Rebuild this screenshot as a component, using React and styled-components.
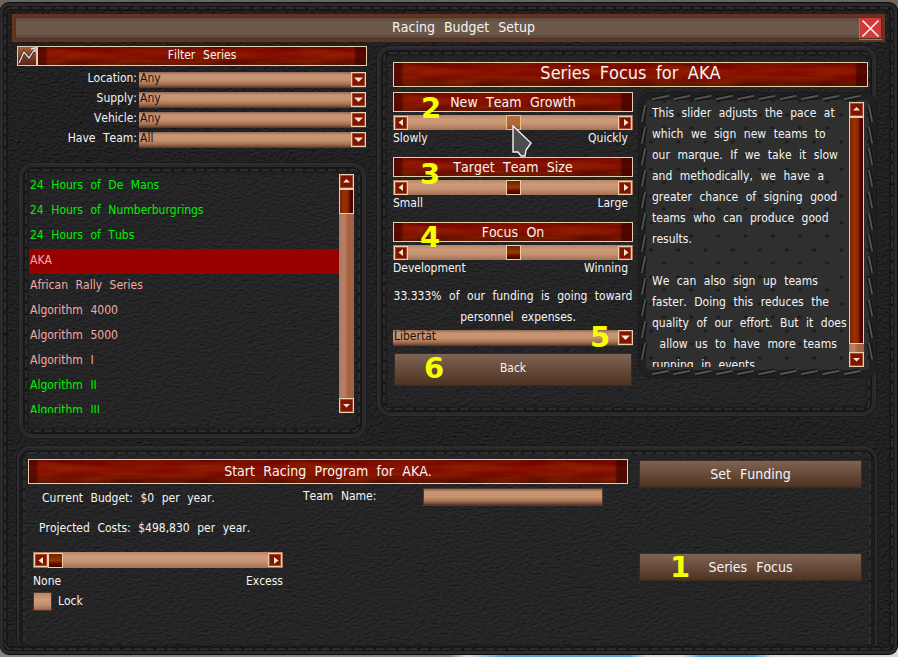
import React from "react";
import styled, { createGlobalStyle, css } from "styled-components";

const svgUrl = svg => `url("data:image/svg+xml,${encodeURIComponent(svg)}")`;

const noise = (freq, color, scale, seed) =>
  svgUrl(
    `<svg xmlns="http://www.w3.org/2000/svg" width="300" height="300"><filter id="n" x="0" y="0" width="100%" height="100%" color-interpolation-filters="sRGB"><feTurbulence type="fractalNoise" baseFrequency="${freq}" numOctaves="4" seed="${seed}" stitchTiles="stitch"/><feDiffuseLighting surfaceScale="${scale}" lighting-color="${color}"><feDistantLight azimuth="250" elevation="55"/></feDiffuseLighting></filter><rect width="300" height="300" filter="url(#n)"/></svg>`
  );

// long horizontal streaks, laid over the red headings
const grain = svgUrl(
  `<svg xmlns="http://www.w3.org/2000/svg" width="260" height="24"><filter id="g" x="0" y="0" width="100%" height="100%" color-interpolation-filters="sRGB"><feTurbulence type="fractalNoise" baseFrequency="0.02 0.16" numOctaves="3" seed="3" stitchTiles="stitch"/><feColorMatrix values="0 0 0 0 0.6  0 0 0 0 0.18  0 0 0 0 0  1 0 0 0 -0.25"/></filter><rect width="260" height="24" filter="url(#g)"/></svg>`
);

const leather = noise("0.22 0.5", "#2d2d2f", 0.9, 4);
const roughLeather = noise("0.3 0.5", "#29292b", 1.3, 9);

const redWood = css`
  background:
    linear-gradient(90deg, rgba(50, 0, 0, 0.5) 0 7px, transparent 10px calc(100% - 12px), rgba(50, 0, 0, 0.6) calc(100% - 10px)),
    ${grain},
    linear-gradient(#680000, #840a00 30%, #7e0700 60%, #5e0e00 85%, #4c1000);
`;

const copper = "linear-gradient(#8d6650, #c89574 18%, #c69272 50%, #a87252 75%, #6d4532 94%, #4c3328)";
const copperV = "linear-gradient(90deg, #a87a61, #b98166 35%, #a95f3d 60%, #97654a)";

const GlobalStyle = createGlobalStyle`
  * {
    box-sizing: border-box;
  }
  body {
    margin: 0;
    overflow: hidden;
    background: #6b665d;
    color: #f4f4f4;
    font-family: "DejaVu Sans Condensed", "DejaVu Sans", sans-serif;
    font-stretch: condensed;
    font-kerning: none;
    font-size: 12px;
    line-height: 16px;
    word-spacing: 4.1px;
    white-space: pre;
  }
`;

const Screen = styled.div`
  width: 898px;
  height: 657px;
  padding: 2px 0 2px 0;
  background: linear-gradient(#6b665d 0 50%, transparent 50%),
    linear-gradient(90deg, #8b8085 0 50%, #d8d8dc 52%, #4f9fdc 56% 70%, #d8d8dc 72% 76%, #4f9fdc 78% 84%, #d8d8dc 86%);
`;

const Window = styled.div`
  position: relative;
  display: flex;
  flex-direction: column;
  height: 653px;
  padding: 12px 12px 0 12px;
  border-radius: 9px;
  border: 1px solid #0c0c0c;
  border-width: 1px 1px 1px 0;
  background: ${roughLeather};
  box-shadow: inset 0 0 0 3px #2a2a2a, inset 0 0 0 8px rgba(14, 14, 14, 0.45);
`;

const StitchSvg = styled.svg`
  position: absolute;
  inset: 0;
  width: 100%;
  height: 100%;
  pointer-events: none;
`;

const StitchLine = styled.rect`
  x: ${props => props.$inset}px;
  y: ${props => props.$inset}px;
  width: calc(100% - ${props => props.$inset * 2}px);
  height: calc(100% - ${props => props.$inset * 2}px);
  fill: none;
  stroke: #414141;
  stroke-width: 1;
  stroke-dasharray: 8 3;
`;

const Stitching = ({ inset, radius = 5 }) => (
  <StitchSvg>
    <StitchLine $inset={inset} rx={radius} />
  </StitchSvg>
);

const TitleBar = styled.div`
  position: relative;
  display: flex;
  align-items: center;
  justify-content: center;
  height: 28px;
  margin-top: -1px;
  padding-left: 53px;
  border: 3px solid #63351f;
  outline: 1px solid #4a3426;
  outline-offset: -4px;
  background: linear-gradient(#5c493d, #6d594a 30%, #6b5748 75%, #554237);
  font-size: 14px;
`;

const TitleText = styled.div`
  flex: 1;
  padding-bottom: 2px;
  text-align: center;
  word-spacing: 5px;
`;

const CloseButton = styled.button`
  display: flex;
  width: 23px;
  height: 23px;
  padding: 0;
  border: 1px solid #dc5a55;
  background: #cf3a3b;
`;

const Main = styled.div`
  display: flex;
  justify-content: space-between;
  height: 396px;
  padding: 4px 9px 0 5px;
`;

const LeftColumn = styled.div`
  display: flex;
  flex-direction: column;
  width: 350px;
`;

const FilterBar = styled.div`
  display: flex;
`;

const ChartButton = styled.div`
  display: flex;
  width: 21px;
  height: 20px;
  border: 1px solid #e0c9ac;
  border-right-width: 2px;
  background: linear-gradient(#a85f38, #7c3a22 60%, #5a2616);
`;

const Heading = styled.div`
  ${redWood}
  flex: 1 0 auto;
  height: ${props => props.$height || 20}px;
  border: 1px solid #e3cfa9;
  font-size: ${props => props.$size || 14}px;
  line-height: ${props => props.$line || 18}px;
  text-align: center;
  word-spacing: 4.4px;
`;

const FilterHeading = styled(Heading)`
  flex: 1;
  margin-left: -1px;
`;

const Filters = styled.div`
  display: grid;
  grid-template-columns: 120px 227px;
  grid-auto-rows: 20px;
  column-gap: 2px;
  padding-top: 6px;
`;

const FilterLabel = styled.div`
  text-align: right;
  line-height: 13px;
`;

const SelectBox = styled.div`
  display: flex;
  justify-content: space-between;
  height: 16px;
  padding-left: 1px;
  background: ${copper};
  color: #1b110b;
  line-height: 13px;
`;

const SquareButton = styled.div`
  display: flex;
  align-items: center;
  justify-content: center;
  flex: none;
  width: ${props => props.$size || 15}px;
  height: ${props => props.$size || 15}px;
  border: 1px solid #ecd0ae;
  background: #7e1503;
  box-shadow: inset 0 0 0 1px #a94a2c;
`;

const Panel = styled.div`
  position: relative;
  border: 2px solid #2d2d2d;
  border-radius: 14px;
  background: ${leather};
  box-shadow: 0 0 0 1px #1a1a1a, inset 0 0 0 2px #282828, inset 0 0 0 6px rgba(18, 18, 18, 0.55),
    inset 0 0 2px 8px rgba(18, 18, 18, 0.3);
`;

const ListPanel = styled(Panel)`
  display: flex;
  width: 347px;
  height: 276px;
  margin: 11px 0 0 2px;
  padding: 9px 10px 0 8px;
`;

const List = styled.div`
  flex: 1;
  height: 239px;
  overflow: hidden;
`;

const ListItem = styled.div`
  height: 25px;
  padding-left: 1px;
  color: ${props => (props.$available ? "#00f000" : "#f2aaa6")};
  background: ${props => (props.$selected ? "#990000" : "none")};
  line-height: 22px;
`;

const VerticalBar = styled.div`
  display: flex;
  flex-direction: column;
  justify-content: space-between;
  width: 15px;
  height: ${props => props.$height}px;
  background: ${copperV};
`;

const VerticalThumb = styled.div`
  height: ${props => props.$height}px;
  margin-bottom: auto;
  border: 1px solid #e8cda8;
  background: linear-gradient(90deg, #7a2400, #963400 30%, #8e2800 60%, #4c0000 85%);
`;

const FocusPanel = styled(Panel)`
  width: 499px;
  height: 370px;
  padding: 14px 0 0 14px;
`;

const FocusBody = styled.div`
  display: flex;
  gap: 5px;
  padding-top: 5px;
`;

const FocusHeading = styled(Heading)`
  width: 475px;
`;

const Controls = styled.div`
  flex: none;
  width: 240px;
`;

const Setting = styled.div`
  height: 65px;
`;

const SliderTrack = styled.div`
  display: flex;
  justify-content: space-between;
  align-items: center;
  height: ${props => props.$height || 15}px;
  margin-top: 3px;
  background: linear-gradient(#b98565, #cd9b7b 30%, #c69373 60%, #a47052);
  border: 1px solid #a87558;
  border-width: 0 1px;
`;

const SliderThumb = styled.div`
  width: 15px;
  height: 15px;
  border: 1px solid ${props => (props.$hover ? "#e3c878" : "#ecd0ae")};
  background: ${props =>
    props.$hover ? "linear-gradient(#b66a3e, #ad6540 70%, #8d4428)" : "linear-gradient(#6f2200, #983800 50%, #6b1000 72%, #450000)"};
`;

const SliderLabels = styled.div`
  display: flex;
  justify-content: space-between;
  padding-right: ${props => props.$right || 0}px;
`;

const Funding = styled.div`
  margin-top: -1px;
  text-align: center;
  line-height: 21px;
`;

const FundingLine = styled.div`
  padding-left: ${props => props.$left || 0}px;
`;

const TeamSelect = styled(SelectBox)`
  margin-top: 2px;
`;

const Button = styled.button`
  display: block;
  width: ${props => props.$width}px;
  height: ${props => props.$height}px;
  padding: 0;
  border: 1px solid #3b2a20;
  background: linear-gradient(#7d6353, #6a4e3d 45%, #4d3222);
  color: #f4f4f4;
  font: inherit;
  font-size: ${props => props.$size || 14}px;
  word-spacing: 5px;
`;

const BackButton = styled(Button)`
  margin: 7px 0 0 1px;
  padding-bottom: 3px;
`;

const HelpBox = styled.div`
  position: relative;
  flex: none;
  width: 239px;
  height: 286px;
  padding: 9px 12px 0 13px;
  border-radius: 12px;
  border: 1px solid #191919;
  background:
    radial-gradient(ellipse 2.5px 2px at 7px 10px, #1c1c1c 60%, transparent),
    radial-gradient(ellipse 2.5px 2px at 20px 23px, #1c1c1c 60%, transparent),
    #2f2f2f;
  background-size: 27.2px 27px;
  background-position: 5px 12px;
  box-shadow: inset 0 0 0 7px #202020;
`;

const HelpContent = styled.div`
  display: flex;
  justify-content: space-between;
`;

const HelpText = styled.div`
  height: 265px;
  padding-top: 1px;
  overflow: hidden;
  line-height: 21px;
`;

const ProgramPanel = styled(Panel)`
  display: flex;
  gap: 11px;
  width: 860px;
  height: 198px;
  margin: 8px 0 0 5px;
  padding: 11px 8px 0 9px;
  border-bottom: 0;
  border-radius: 14px 14px 0 0;
  box-shadow: 0 0 0 1px #1a1a1a, inset 0 2px 0 #282828, inset 0 6px 0 rgba(18, 18, 18, 0.55),
    inset 6px 0 0 rgba(18, 18, 18, 0.45), inset -6px 0 0 rgba(18, 18, 18, 0.45);
  clip-path: inset(-1px -1px 0);
`;

const PanelStitching = styled.div`
  position: absolute;
  inset: 0 0 -20px 0;
  pointer-events: none;
`;

const Program = styled.div`
  width: 600px;
`;

const ProgramDetails = styled.div`
  display: flex;
`;

const Budget = styled.div`
  width: 250px;
  margin-left: 5px;
`;

const BudgetLine = styled.div`
  height: 30px;
  padding: 6px 0 0 ${props => props.$left}px;
`;

const BudgetTrack = styled(SliderTrack)`
  height: 16px;
  margin: 8px 0 5px;
  justify-content: flex-start;
`;

const Spacer = styled.div`
  flex: 1;
`;

const LockRow = styled.div`
  display: flex;
  gap: 6px;
  margin-top: 3px;
  line-height: 19px;
`;

const Checkbox = styled.div`
  width: 19px;
  height: 19px;
  border: 1px solid #523628;
  background: linear-gradient(#b68364, #cf9d7d 40%, #c29070 70%, #9a6848);
`;

const TeamName = styled.div`
  display: flex;
  justify-content: space-between;
  width: 300px;
  height: 18px;
  margin: 4px 0 0 20px;
`;

const NameInput = styled.div`
  width: 180px;
  height: 18px;
  border: 1px solid #513a31;
  background: ${copper};
`;

const Actions = styled.div`
  display: flex;
  flex-direction: column;
  gap: 65px;
  padding-top: 1px;
`;

const Marker = styled.div`
  position: absolute;
  left: ${props => props.$x}px;
  top: ${props => props.$y}px;
  color: #f6ff00;
  font: bold 29px/30px "DejaVu Sans", sans-serif;
`;

const Cursor = styled.svg`
  position: absolute;
  left: 511px;
  top: 122px;
`;

const shapes = {
  up: "M3 7.5 L6.5 4 L10 7.5 Z",
  down: "M2 4.5 H11 L6.5 9 Z",
  smallDown: "M3 5 H10 L6.5 8.5 Z",
  left: "M8 3 V10 L3.5 6.5 Z",
  right: "M5 3 V10 L9.5 6.5 Z"
};

const ArrowButton = ({ shape, size }) => (
  <SquareButton $size={size}>
    <svg width="13" height="13" style={{ flex: "none" }}>
      <path d={shapes[shape]} fill="#f7e6cd" />
    </svg>
  </SquareButton>
);

const Select = ({ value }) => (
  <SelectBox>
    {value}
    <ArrowButton shape="down" />
  </SelectBox>
);

// heavy slanted thread around the help box
const across = Array.from({ length: 10 }, (_, i) => 14 + i * 21.3);
const downward = Array.from({ length: 12 }, (_, i) => 13 + i * 21.6);
const thread =
  across.map(x => `M${x} 6 L${x + 15} 3 M${x} 281 L${x + 15} 278`).join(" ") +
  downward.map(y => `M3 ${y + 15} L6 ${y} M230 ${y} L233 ${y + 15}`).join(" ");

const HelpThread = () => (
  <StitchSvg>
    <path d={thread} stroke="#161616" strokeWidth="5" />
    <path d={thread} stroke="#545454" strokeWidth="1.8" strokeLinecap="round" />
  </StitchSvg>
);

const filters = [
  ["Location:", "Any"],
  ["Supply:", "Any"],
  ["Vehicle:", "Any"],
  ["Have Team:", "All"]
];

const series = [
  { name: "24 Hours of De Mans", available: true },
  { name: "24 Hours of Numberburgrings", available: true },
  { name: "24 Hours of Tubs", available: true },
  { name: "AKA", selected: true },
  { name: "African Rally Series" },
  { name: "Algorithm 4000" },
  { name: "Algorithm 5000" },
  { name: "Algorithm I" },
  { name: "Algorithm II", available: true },
  { name: "Algorithm III", available: true }
];

const settings = [
  { title: "New Team Growth", low: "Slowly", high: "Quickly", hover: true },
  { title: "Target Team Size", low: "Small", high: "Large" },
  { title: "Focus On", low: "Development", high: "Winning" }
];

const helpLines = [
  "This slider adjusts the pace at",
  "which we sign new teams to",
  "our marque. If we take it slow",
  "and methodically, we have a",
  "greater chance of signing good",
  "teams who can produce good",
  "results.",
  " ",
  "We can also sign up teams",
  "faster. Doing this reduces the",
  "quality of our effort. But it does",
  " allow us to have more teams",
  "running in events."
];

const markers = [
  [670, 549],
  [421, 90],
  [420, 156],
  [420, 219],
  [590, 319],
  [424, 350]
];

const App = () => {
  return (
    <Screen>
      <GlobalStyle />
      <Window>
        <Stitching inset={5} radius={6} />
        <TitleBar>
          <TitleText>Racing Budget Setup</TitleText>
          <CloseButton>
            <svg width="21" height="21">
              <path d="M2.5 2.5 L18.5 18.5 M18.5 2.5 L2.5 18.5" stroke="#fbf0ee" strokeWidth="1.6" />
            </svg>
          </CloseButton>
        </TitleBar>
        <Main>
          <LeftColumn>
            <FilterBar>
              <ChartButton>
                <svg width="18" height="18">
                  <path d="M1 16 L6 5 L11 11 L16 3" fill="none" stroke="#422" strokeWidth="3" />
                  <path d="M1 16 L6 5 L11 11 L16 3 M13 2 L17 1 V5" fill="none" stroke="#dedede" strokeWidth="1.4" />
                </svg>
              </ChartButton>
              <FilterHeading $size={12} $line={17}>
                Filter Series
              </FilterHeading>
            </FilterBar>
            <Filters>
              {filters.map(([label, value]) => (
                <React.Fragment key={label}>
                  <FilterLabel>{label}</FilterLabel>
                  <Select value={value} />
                </React.Fragment>
              ))}
            </Filters>
            <ListPanel>
              <Stitching inset={5} />
              <List>
                {series.map(item => (
                  <ListItem key={item.name} $available={item.available} $selected={item.selected}>
                    {item.name}
                  </ListItem>
                ))}
              </List>
              <VerticalBar $height={239}>
                <ArrowButton shape="up" />
                <VerticalThumb $height={25} />
                <ArrowButton shape="smallDown" />
              </VerticalBar>
            </ListPanel>
          </LeftColumn>
          <FocusPanel>
            <Stitching inset={5} />
            <FocusHeading $height={25} $size={18} $line={20}>
              Series Focus for AKA
            </FocusHeading>
            <FocusBody>
              <Controls>
                {settings.map(item => (
                  <Setting key={item.title}>
                    <Heading>{item.title}</Heading>
                    <SliderTrack>
                      <ArrowButton shape="left" size={14} />
                      <SliderThumb $hover={item.hover} />
                      <ArrowButton shape="right" size={14} />
                    </SliderTrack>
                    <SliderLabels $right={5}>
                      <span>{item.low}</span>
                      <span>{item.high}</span>
                    </SliderLabels>
                  </Setting>
                ))}
                <Funding>
                  <FundingLine>33.333% of our funding is going toward</FundingLine>
                  <FundingLine $left={10}>personnel expenses.</FundingLine>
                </Funding>
                <TeamSelect>
                  Libertät
                  <ArrowButton shape="down" />
                </TeamSelect>
                <BackButton $width={238} $height={33} $size={12}>
                  Back
                </BackButton>
              </Controls>
              <HelpBox>
                <HelpThread />
                <HelpContent>
                  <HelpText>{helpLines.join("\n")}</HelpText>
                  <VerticalBar $height={265}>
                    <ArrowButton shape="up" />
                    <VerticalThumb $height={227} />
                    <ArrowButton shape="smallDown" />
                  </VerticalBar>
                </HelpContent>
              </HelpBox>
            </FocusBody>
          </FocusPanel>
        </Main>
        <ProgramPanel>
          <PanelStitching>
            <Stitching inset={5} />
          </PanelStitching>
          <Program>
            <Heading $height={25} $line={22}>
              Start Racing Program for AKA.
            </Heading>
            <ProgramDetails>
              <Budget>
                <BudgetLine $left={9}>Current Budget: $0 per year.</BudgetLine>
                <BudgetLine $left={6}>Projected Costs: $498,830 per year.</BudgetLine>
                <BudgetTrack>
                  <ArrowButton shape="left" size={14} />
                  <SliderThumb />
                  <Spacer />
                  <ArrowButton shape="right" size={14} />
                </BudgetTrack>
                <SliderLabels>
                  <span>None</span>
                  <span>Excess</span>
                </SliderLabels>
                <LockRow>
                  <Checkbox />
                  Lock
                </LockRow>
              </Budget>
              <TeamName>
                Team Name:
                <NameInput />
              </TeamName>
            </ProgramDetails>
          </Program>
          <Actions>
            <Button $width={223} $height={28}>
              Set Funding
            </Button>
            <Button $width={223} $height={28}>
              Series Focus
            </Button>
          </Actions>
        </ProgramPanel>
        {markers.map(([x, y], i) => (
          <Marker key={i} $x={x} $y={y}>
            {i + 1}
          </Marker>
        ))}
        <Cursor width="24" height="32">
          <path d="M2 1 V27 H7 L10 31 H14 L15 25 L20 18 Z" fill="#4c4c4c" stroke="#f2f2f2" strokeWidth="1.4" />
        </Cursor>
      </Window>
    </Screen>
  );
};

export default App;
